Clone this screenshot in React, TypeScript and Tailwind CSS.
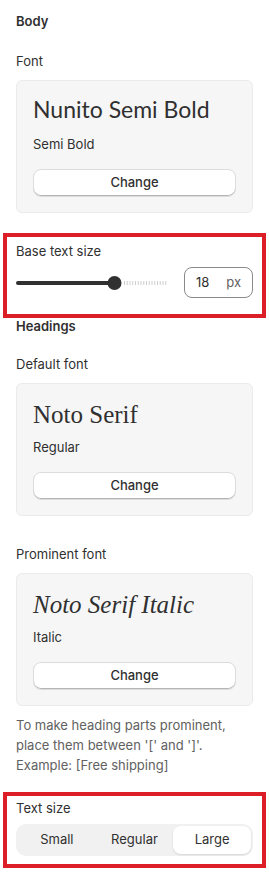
import React from "react";

const sans = { fontFamily: "Inter, 'Liberation Sans', sans-serif" };

function FontCard({
  title,
  titleClass,
  sub,
  serif,
}: {
  title: string;
  titleClass: string;
  sub: string;
  serif?: boolean;
}) {
  return (
    <div
      className={
        serif
          ? "mt-[9px] rounded-[6px] border border-[#ebebeb] bg-[#f6f6f6] px-4 pt-[15px] pb-[15px]"
          : "mt-[9px] rounded-[6px] border border-[#ebebeb] bg-[#f6f6f6] px-4 pt-[12px] pb-[15px]"
      }
    >
      <div className={titleClass}>{title}</div>
      <div
        className={
          serif
            ? "mt-[6px] text-[13px] leading-5 text-[#303030]"
            : "mt-[9px] text-[13px] leading-5 text-[#303030]"
        }
      >
        {sub}
      </div>
      <button className="mt-[15px] h-[28px] w-full rounded-[8px] border border-[#dcdcdc] bg-white text-[13px] font-medium text-[#303030] shadow-[inset_0_-1px_0_#b5b5b5]">
        Change
      </button>
    </div>
  );
}

function Slider() {
  const dots = [];
  for (let i = 0; i < 16; i++) {
    dots.push(<rect key={i} x={108 + i * 2.75} y={11} width={1} height={4} fill="#cfcfcf" />);
  }
  return (
    <svg width="160" height="26" viewBox="0 0 160 26" className="block">
      <rect x={0} y={11} width={100} height={4} rx={2} fill="#303030" />
      {dots}
      <circle cx={98.5} cy={13} r={7} fill="#303030" />
    </svg>
  );
}

export default function App() {
  return (
    <div className="w-[269px] bg-white px-4 pt-[11px] pb-4 text-[#303030]" style={sans}>
      <div className="text-[13px] font-semibold leading-5">Body</div>
      <div className="mt-5 text-[13px] leading-5">Font</div>
      <FontCard
        title="Nunito Semi Bold"
        titleClass="text-[23px] leading-8 font-normal text-[#303030] [font-family:Lato,'Noto_Sans',sans-serif]"
        sub="Semi Bold"
      />

      <div className="-mx-[13px] mt-[20px] border-4 border-[#dc1f26] pl-[9px] pr-[9px] pt-[4px] pb-[16px]">
        <div className="text-[13px] leading-5">Base text size</div>
        <div className="mt-[6px] flex items-center justify-between">
          <Slider />
          <div className="flex h-[31px] w-[69px] items-center rounded-[8px] border border-[#8a8a8a] pl-[11px] pr-[11px] text-[13px]">
            <span className="flex-1">18</span>
            <span className="text-[#616161]">px</span>
          </div>
        </div>
      </div>

      <div className="mt-[-2px] text-[13px] font-semibold leading-5">Headings</div>
      <div className="mt-[18px] text-[13px] leading-5">Default font</div>
      <FontCard
        serif
        title="Noto Serif"
        titleClass="text-[25px] leading-8 text-[#303030] [font-family:'Liberation_Serif',serif]"
        sub="Regular"
      />

      <div className="mt-[28px] text-[13px] leading-5">Prominent font</div>
      <FontCard
        serif
        title="Noto Serif Italic"
        titleClass="text-[25px] leading-8 italic text-[#303030] [font-family:'Liberation_Serif',serif]"
        sub="Italic"
      />

      <div className="mt-[9px] text-[13px] leading-5 text-[#616161]">
        To make heading parts prominent,
        <br />
        place them between '[' and ']'.
        <br />
        Example: [Free shipping]
      </div>

      <div className="-mx-[13px] mt-[17px] border-4 border-[#dc1f26] pl-[9px] pr-[9px] pt-[2px] pb-[8px]">
        <div className="text-[13px] leading-5">Text size</div>
        <div className="mt-[6px] grid h-[32px] grid-cols-3 rounded-[10px] bg-[#f1f1f1] p-[2px] text-[13px]">
          <div className="flex items-center justify-center">Small</div>
          <div className="flex items-center justify-center">Regular</div>
          <div className="flex items-center justify-center rounded-[8px] bg-white shadow-[0_1px_2px_rgba(0,0,0,0.12)]">
            Large
          </div>
        </div>
      </div>
    </div>
  );
}
